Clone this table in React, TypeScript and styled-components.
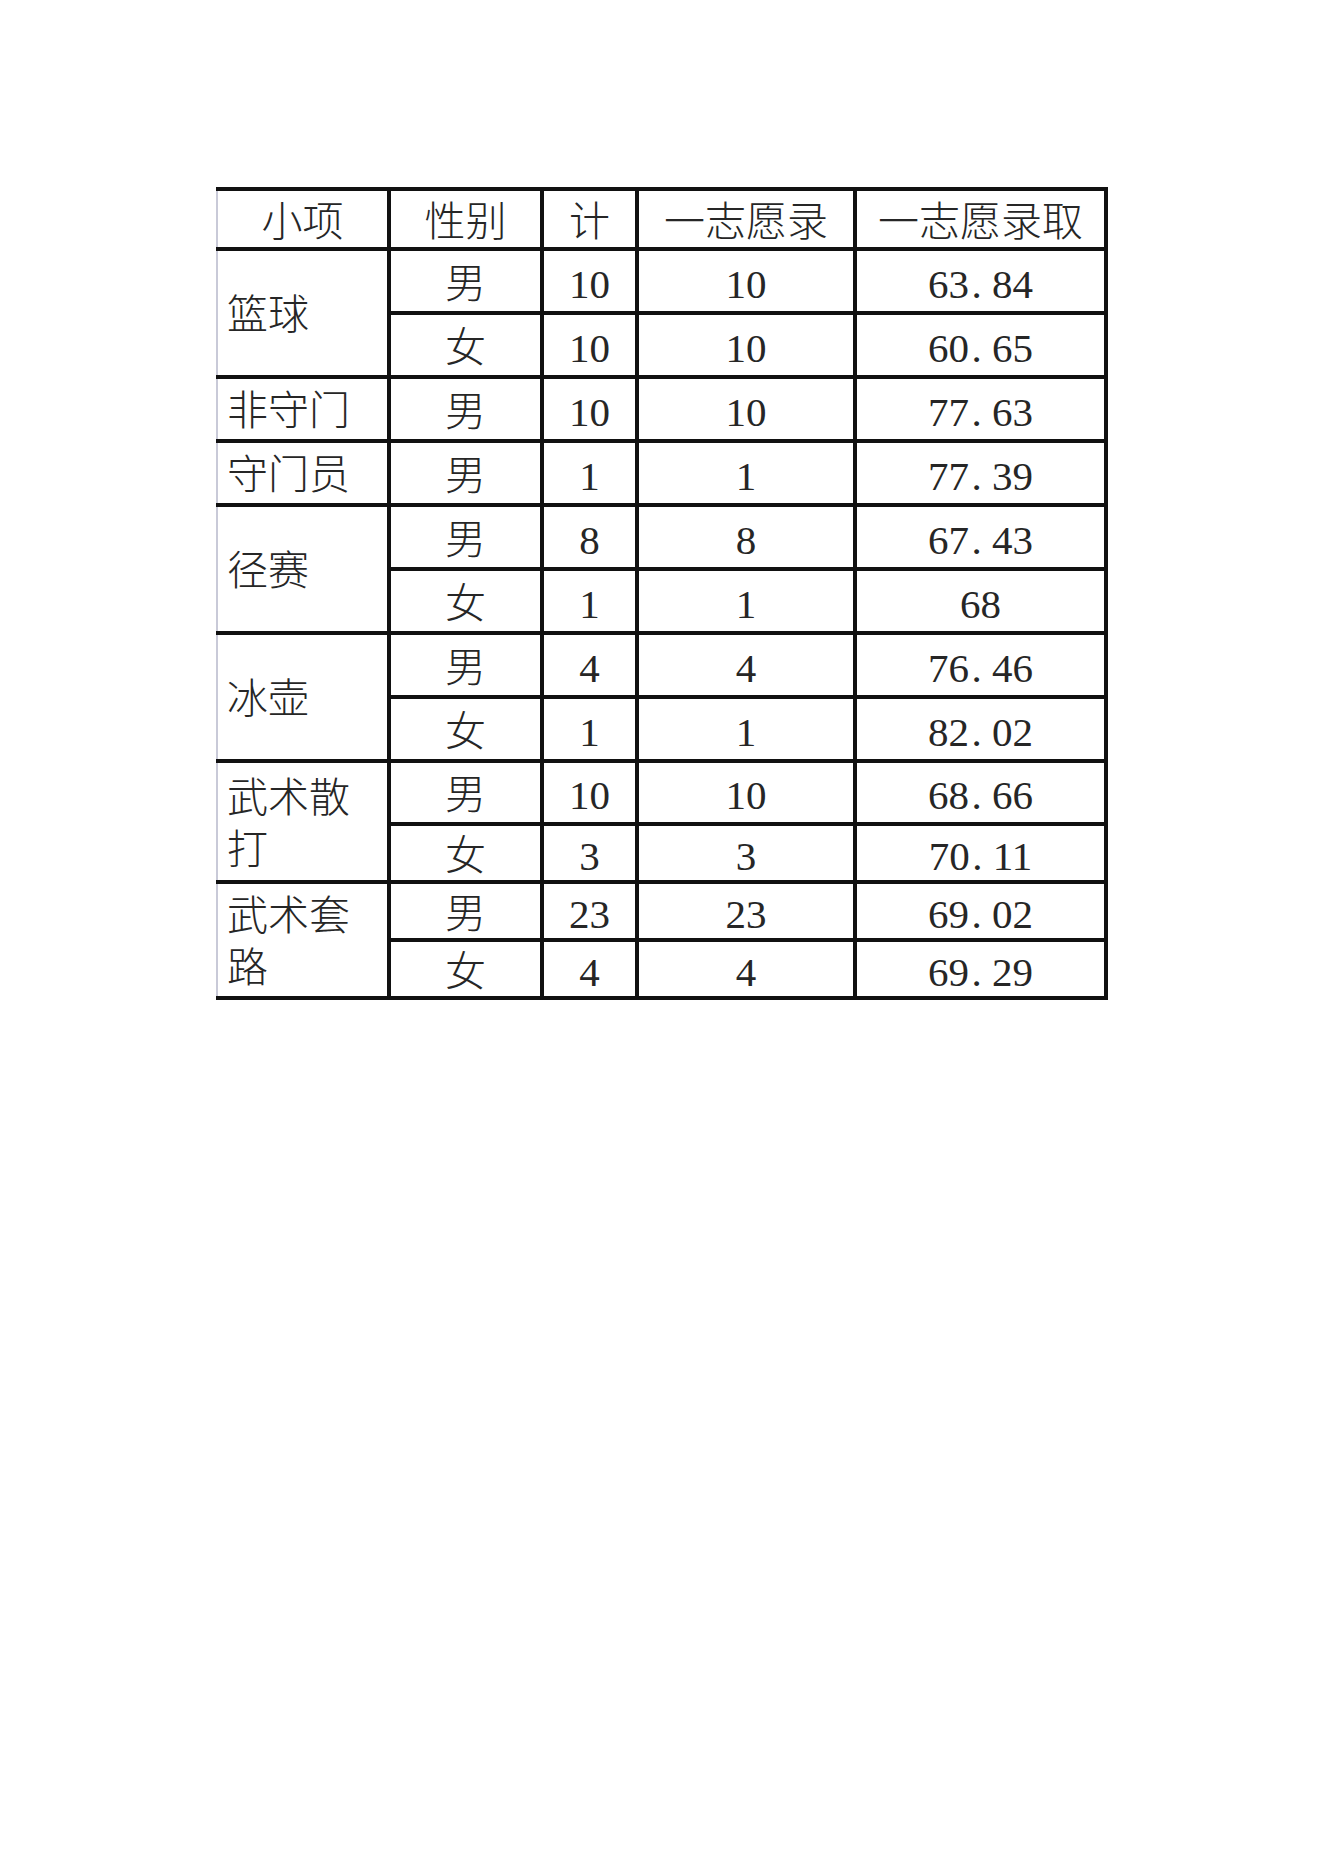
import * as React from 'react'
import styled, { createGlobalStyle } from 'styled-components'

const GlobalStyle = createGlobalStyle`
  html, body {
    margin: 0;
    padding: 0;
    background: #ffffff;
  }
`

const Page = styled.div`
  width: 1323px;
  min-height: 1871px;
  box-sizing: border-box;
  padding: 187px 0 0 216px;
  background: #ffffff;
  font-family: 'Liberation Serif', 'Noto Sans CJK SC', serif;
  color: #262626;
`

const Table = styled.table`
  border-collapse: collapse;
  table-layout: fixed;
  width: 889px;
  font-size: 41px;
  font-weight: 300;
`

const Row = styled.tr<{ $h: number }>`
  height: ${(p) => p.$h}px;
`

const Cell = styled.td<{ $left?: boolean; $edge?: boolean }>`
  border: 4px solid #111111;
  ${(p) => (p.$edge ? 'border-left: 2px solid #c9cad8;' : '')}
  padding: ${(p) => (p.$left ? '4px 18px 0 9px' : '5px 0 0 0')};
  text-align: ${(p) => (p.$left ? 'left' : 'center')};
  vertical-align: middle;
  line-height: ${(p) => (p.$left ? '52px' : '44px')};
  white-space: normal;
  word-break: break-all;
`

const HeadCell = styled(Cell).attrs({ as: 'th' })`
  font-weight: 300;
  padding-top: 6px;
`

const Dot = styled.span`
  display: inline-block;
  width: 0.5em;
  text-align: left;
  padding-left: 0.06em;
`

interface Entry {
  group?: { name: string; span: number }
  sex: string
  total: string
  first: string
  score: string
  h: number
}

const rows: Entry[] = [
  { group: { name: '篮球', span: 2 }, sex: '男', total: '10', first: '10', score: '63.84', h: 64 },
  { sex: '女', total: '10', first: '10', score: '60.65', h: 64 },
  { group: { name: '非守门', span: 1 }, sex: '男', total: '10', first: '10', score: '77.63', h: 64 },
  { group: { name: '守门员', span: 1 }, sex: '男', total: '1', first: '1', score: '77.39', h: 64 },
  { group: { name: '径赛', span: 2 }, sex: '男', total: '8', first: '8', score: '67.43', h: 64 },
  { sex: '女', total: '1', first: '1', score: '68', h: 64 },
  { group: { name: '冰壶', span: 2 }, sex: '男', total: '4', first: '4', score: '76.46', h: 64 },
  { sex: '女', total: '1', first: '1', score: '82.02', h: 64 },
  { group: { name: '武术散打', span: 2 }, sex: '男', total: '10', first: '10', score: '68.66', h: 63 },
  { sex: '女', total: '3', first: '3', score: '70.11', h: 58 },
  { group: { name: '武术套路', span: 2 }, sex: '男', total: '23', first: '23', score: '69.02', h: 58 },
  { sex: '女', total: '4', first: '4', score: '69.29', h: 58 },
]

const Score: React.FC<{ value: string }> = ({ value }) => {
  const [a, b] = value.split('.')
  if (b === undefined) return <>{a}</>
  return (
    <>
      {a}
      <Dot>.</Dot>
      {b}
    </>
  )
}

const App: React.FC = () => (
  <Page>
    <GlobalStyle />
    <Table>
      <colgroup>
        <col style={{ width: 172 }} />
        <col style={{ width: 153 }} />
        <col style={{ width: 95 }} />
        <col style={{ width: 218 }} />
        <col style={{ width: 251 }} />
      </colgroup>
      <thead>
        <Row $h={60}>
          <HeadCell $edge>小项</HeadCell>
          <HeadCell>性别</HeadCell>
          <HeadCell>计</HeadCell>
          <HeadCell>一志愿录</HeadCell>
          <HeadCell>一志愿录取</HeadCell>
        </Row>
      </thead>
      <tbody>
        {rows.map((r, i) => (
          <Row key={i} $h={r.h}>
            {r.group && (
              <Cell $left $edge rowSpan={r.group.span}>
                {r.group.name}
              </Cell>
            )}
            <Cell>{r.sex}</Cell>
            <Cell>{r.total}</Cell>
            <Cell>{r.first}</Cell>
            <Cell>
              <Score value={r.score} />
            </Cell>
          </Row>
        ))}
      </tbody>
    </Table>
  </Page>
)

export default App
